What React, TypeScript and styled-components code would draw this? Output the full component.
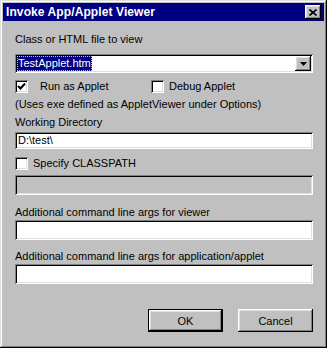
import styled, { createGlobalStyle, css } from "styled-components";

const GlobalStyle = createGlobalStyle`
  html, body {
    margin: 0;
    padding: 0;
    background: #c0c0c0;
  }
  body {
    font-family: "Liberation Sans", Arial, sans-serif;
    font-size: 11px;
    color: #000;
  }
`;

const raised = css`
  box-shadow: inset -1px -1px #000, inset 1px 1px #fff, inset -2px -2px #808080, inset 2px 2px #dfdfdf;
`;

const sunken = css`
  box-shadow: inset 1px 1px #808080, inset -1px -1px #fff, inset 2px 2px #000, inset -2px -2px #dfdfdf;
`;

const Window = styled.div`
  width: 327px;
  height: 348px;
  box-sizing: border-box;
  padding: 3px;
  background: #c0c0c0;
  box-shadow: inset -1px -1px #000, inset 1px 1px #dfdfdf, inset -2px -2px #808080, inset 2px 2px #fff;
  display: flex;
  flex-direction: column;
`;

const TitleBar = styled.div`
  height: 18px;
  background: #000080;
  display: flex;
  align-items: center;
  justify-content: space-between;
  padding: 0 3px 0 3px;
`;

const Title = styled.span`
  color: #fff;
  font-weight: bold;
  font-size: 12px;
  letter-spacing: 0.1px;
`;

const CloseButton = styled.div`
  width: 16px;
  height: 14px;
  background: #c0c0c0;
  ${raised};
  display: flex;
  align-items: center;
  justify-content: center;
`;

const Body = styled.div`
  flex: 1;
  display: flex;
  flex-direction: column;
  padding: 12px 11px 13px 12px;
`;

const Label = styled.div<{ $top: number }>`
  line-height: 13px;
  height: 13px;
  margin-top: ${(p) => p.$top}px;
  white-space: nowrap;
`;

const Field = styled.div<{ $top: number; $height: number; $disabled?: boolean }>`
  margin-top: ${(p) => p.$top}px;
  height: ${(p) => p.$height}px;
  box-sizing: border-box;
  background: ${(p) => (p.$disabled ? "#c0c0c0" : "#fff")};
  ${sunken};
  display: flex;
  align-items: center;
  padding: 2px 2px 2px 3px;
  line-height: 13px;
`;

const Combo = styled(Field)`
  padding: 2px;
  justify-content: space-between;
`;

const Selected = styled.span`
  background: #000080;
  color: #fff;
  height: 15px;
  line-height: 15px;
  padding: 0 1px;
  outline: 1px dotted #c0c0c0;
  outline-offset: -1px;
`;

const DropButton = styled.div`
  width: 16px;
  height: 15px;
  background: #c0c0c0;
  ${raised};
  display: flex;
  align-items: center;
  justify-content: center;
`;

const CheckRow = styled.div<{ $top: number }>`
  display: flex;
  margin-top: ${(p) => p.$top}px;
  height: 13px;
`;

const CheckItem = styled.div<{ $width?: number; $gap: number }>`
  display: flex;
  align-items: center;
  gap: ${(p) => p.$gap}px;
  width: ${(p) => (p.$width ? `${p.$width}px` : "auto")};
  line-height: 13px;
`;

const Box = styled.div`
  width: 13px;
  height: 13px;
  box-sizing: border-box;
  background: #fff;
  ${sunken};
  display: flex;
  align-items: center;
  justify-content: center;
`;

const ButtonRow = styled.div`
  margin-top: auto;
  display: flex;
  justify-content: flex-end;
  gap: 15px;
`;

const Button = styled.div<{ $default?: boolean }>`
  width: 75px;
  height: 23px;
  box-sizing: border-box;
  background: #c0c0c0;
  display: flex;
  align-items: center;
  justify-content: center;
  ${(p) =>
    p.$default
      ? css`
          border: 1px solid #000;
          ${raised};
        `
      : raised};
`;

function CheckMark() {
  return (
    <svg width="9" height="9" viewBox="0 0 9 9">
      <path d="M1 4 L3.5 6.5 L8 1.5" fill="none" stroke="#000" strokeWidth="2" />
    </svg>
  );
}

function Check(props: { label: string; checked?: boolean; gap: number; width?: number }) {
  return (
    <CheckItem $gap={props.gap} $width={props.width}>
      <Box>{props.checked && <CheckMark />}</Box>
      <span>{props.label}</span>
    </CheckItem>
  );
}

export default function App() {
  return (
    <>
      <GlobalStyle />
      <Window>
        <TitleBar>
          <Title>Invoke App/Applet Viewer</Title>
          <CloseButton>
            <svg width="8" height="7" viewBox="0 0 8 7">
              <path d="M0.5 0.5 L7.5 6.5 M7.5 0.5 L0.5 6.5" stroke="#000" strokeWidth="1.6" />
            </svg>
          </CloseButton>
        </TitleBar>
        <Body>
          <Label $top={0}>Class or HTML file to view</Label>
          <Combo $top={8} $height={19}>
            <Selected>TestApplet.htm</Selected>
            <DropButton>
              <svg width="7" height="4" viewBox="0 0 7 4">
                <path d="M0 0 H7 L3.5 4 Z" fill="#000" />
              </svg>
            </DropButton>
          </Combo>
          <CheckRow $top={7}>
            <Check label="Run as Applet" checked gap={12} width={136} />
            <Check label="Debug Applet" gap={5} />
          </CheckRow>
          <Label $top={5}>(Uses exe defined as AppletViewer under Options)</Label>
          <Label $top={5}>Working Directory</Label>
          <Field $top={3} $height={17}>D:\test\</Field>
          <CheckRow $top={8}>
            <Check label="Specify CLASSPATH" gap={5} />
          </CheckRow>
          <Field $top={5} $height={20} $disabled />
          <Label $top={11}>Additional command line args for viewer</Label>
          <Field $top={1} $height={20} />
          <Label $top={10}>Additional command line args for application/applet</Label>
          <Field $top={1} $height={20} />
          <ButtonRow>
            <Button $default>OK</Button>
            <Button>Cancel</Button>
          </ButtonRow>
        </Body>
      </Window>
    </>
  );
}
